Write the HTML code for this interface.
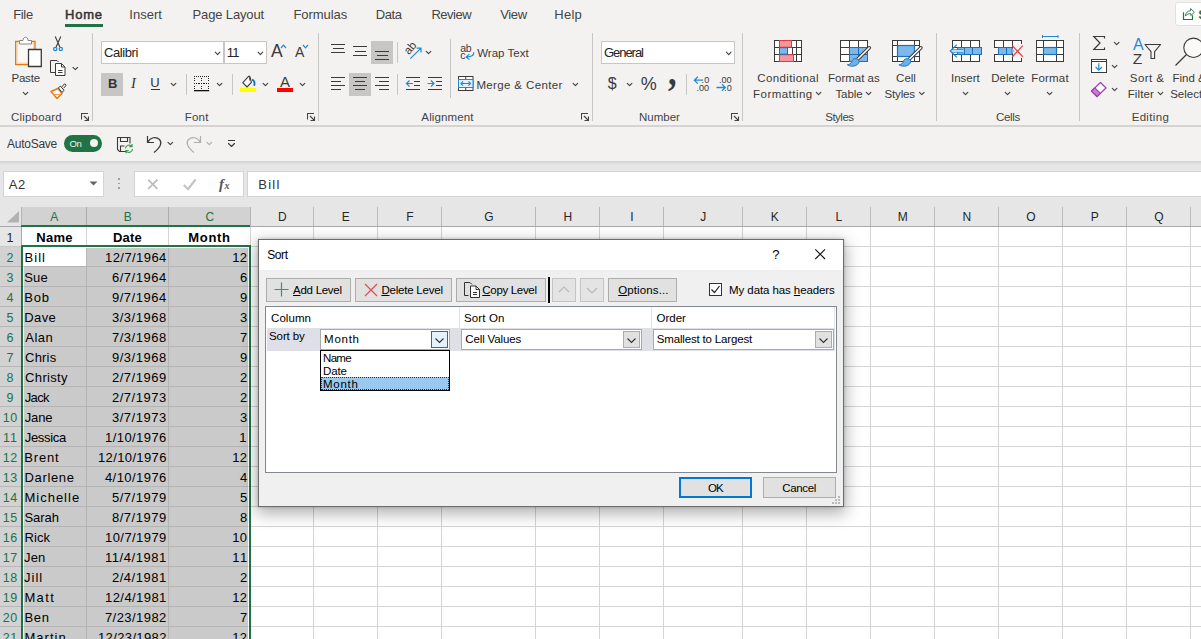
<!DOCTYPE html>
<html><head><meta charset="utf-8"><title>Sort</title><style>
html,body{margin:0;padding:0}
body{width:1201px;height:639px;overflow:hidden;position:relative;background:#fff;font-family:"Liberation Sans",sans-serif}
div,svg,span{position:absolute}
.t{white-space:nowrap;line-height:1}
u{text-decoration:underline;text-underline-offset:1px;text-decoration-thickness:1px}
</style></head><body>
<div style="left:0px;top:0px;width:1201px;height:125px;background:#f3f2f1;"></div>
<div style="left:0px;top:125px;width:1201px;height:2px;background:#d6d4d2;"></div>
<div style="left:0px;top:127px;width:1201px;height:34px;background:#f3f2f1;"></div>
<div style="left:0px;top:161px;width:1201px;height:46px;background:#e6e6e6;"></div>
<div style="left:0px;top:161px;width:1201px;height:4px;background:linear-gradient(#d4d4d4,#e6e6e6)"></div>
<div style="left:0px;top:207px;width:1201px;height:20px;background:#e6e6e6;"></div>
<div style="left:22px;top:207px;width:228px;height:19px;background:#d2d2d2;"></div>
<div style="left:86px;top:207px;width:1px;height:19px;background:#adadad;"></div>
<div style="left:168px;top:207px;width:1px;height:19px;background:#adadad;"></div>
<div style="left:250px;top:207px;width:1px;height:19px;background:#b4b4b4;"></div>
<div style="left:313px;top:207px;width:1px;height:19px;background:#b9b9b9;"></div>
<div style="left:377px;top:207px;width:1px;height:19px;background:#b9b9b9;"></div>
<div style="left:441px;top:207px;width:1px;height:19px;background:#b9b9b9;"></div>
<div style="left:535px;top:207px;width:1px;height:19px;background:#b9b9b9;"></div>
<div style="left:599px;top:207px;width:1px;height:19px;background:#b9b9b9;"></div>
<div style="left:663px;top:207px;width:1px;height:19px;background:#b9b9b9;"></div>
<div style="left:742px;top:207px;width:1px;height:19px;background:#b9b9b9;"></div>
<div style="left:806px;top:207px;width:1px;height:19px;background:#b9b9b9;"></div>
<div style="left:870px;top:207px;width:1px;height:19px;background:#b9b9b9;"></div>
<div style="left:934px;top:207px;width:1px;height:19px;background:#b9b9b9;"></div>
<div style="left:998px;top:207px;width:1px;height:19px;background:#b9b9b9;"></div>
<div style="left:1062px;top:207px;width:1px;height:19px;background:#b9b9b9;"></div>
<div style="left:1126px;top:207px;width:1px;height:19px;background:#b9b9b9;"></div>
<div style="left:1190px;top:207px;width:1px;height:19px;background:#b9b9b9;"></div>
<div style="left:21px;top:207px;width:1px;height:19px;background:#b2b2b2;"></div>
<div style="left:0px;top:226px;width:1201px;height:1px;background:#a9a9a9;"></div>
<div style="left:0px;top:226px;width:22px;height:1px;background:#a8a8a8;"></div>
<div style="left:22px;top:227px;width:1179px;height:412px;background:#fff;"></div>
<div style="left:0px;top:227px;width:22px;height:412px;background:#e6e6e6;"></div>
<div style="left:0px;top:247px;width:22px;height:392px;background:#d2d2d2;"></div>
<div style="left:21px;top:227px;width:1px;height:20px;background:#a8a8a8;"></div>
<div style="left:250px;top:227px;width:1px;height:412px;background:#d5d5d5;"></div>
<div style="left:313px;top:227px;width:1px;height:412px;background:#d5d5d5;"></div>
<div style="left:377px;top:227px;width:1px;height:412px;background:#d5d5d5;"></div>
<div style="left:441px;top:227px;width:1px;height:412px;background:#d5d5d5;"></div>
<div style="left:535px;top:227px;width:1px;height:412px;background:#d5d5d5;"></div>
<div style="left:599px;top:227px;width:1px;height:412px;background:#d5d5d5;"></div>
<div style="left:663px;top:227px;width:1px;height:412px;background:#d5d5d5;"></div>
<div style="left:742px;top:227px;width:1px;height:412px;background:#d5d5d5;"></div>
<div style="left:806px;top:227px;width:1px;height:412px;background:#d5d5d5;"></div>
<div style="left:870px;top:227px;width:1px;height:412px;background:#d5d5d5;"></div>
<div style="left:934px;top:227px;width:1px;height:412px;background:#d5d5d5;"></div>
<div style="left:998px;top:227px;width:1px;height:412px;background:#d5d5d5;"></div>
<div style="left:1062px;top:227px;width:1px;height:412px;background:#d5d5d5;"></div>
<div style="left:1126px;top:227px;width:1px;height:412px;background:#d5d5d5;"></div>
<div style="left:1190px;top:227px;width:1px;height:412px;background:#d5d5d5;"></div>
<div style="left:22px;top:246px;width:1179px;height:1px;background:#d5d5d5;"></div>
<div style="left:0px;top:246px;width:22px;height:1px;background:#c9c9c9;"></div>
<div style="left:22px;top:266px;width:1179px;height:1px;background:#d5d5d5;"></div>
<div style="left:0px;top:266px;width:22px;height:1px;background:#b7b7b7;"></div>
<div style="left:22px;top:286px;width:1179px;height:1px;background:#d5d5d5;"></div>
<div style="left:0px;top:286px;width:22px;height:1px;background:#b7b7b7;"></div>
<div style="left:22px;top:306px;width:1179px;height:1px;background:#d5d5d5;"></div>
<div style="left:0px;top:306px;width:22px;height:1px;background:#b7b7b7;"></div>
<div style="left:22px;top:326px;width:1179px;height:1px;background:#d5d5d5;"></div>
<div style="left:0px;top:326px;width:22px;height:1px;background:#b7b7b7;"></div>
<div style="left:22px;top:346px;width:1179px;height:1px;background:#d5d5d5;"></div>
<div style="left:0px;top:346px;width:22px;height:1px;background:#b7b7b7;"></div>
<div style="left:22px;top:366px;width:1179px;height:1px;background:#d5d5d5;"></div>
<div style="left:0px;top:366px;width:22px;height:1px;background:#b7b7b7;"></div>
<div style="left:22px;top:386px;width:1179px;height:1px;background:#d5d5d5;"></div>
<div style="left:0px;top:386px;width:22px;height:1px;background:#b7b7b7;"></div>
<div style="left:22px;top:406px;width:1179px;height:1px;background:#d5d5d5;"></div>
<div style="left:0px;top:406px;width:22px;height:1px;background:#b7b7b7;"></div>
<div style="left:22px;top:426px;width:1179px;height:1px;background:#d5d5d5;"></div>
<div style="left:0px;top:426px;width:22px;height:1px;background:#b7b7b7;"></div>
<div style="left:22px;top:446px;width:1179px;height:1px;background:#d5d5d5;"></div>
<div style="left:0px;top:446px;width:22px;height:1px;background:#b7b7b7;"></div>
<div style="left:22px;top:466px;width:1179px;height:1px;background:#d5d5d5;"></div>
<div style="left:0px;top:466px;width:22px;height:1px;background:#b7b7b7;"></div>
<div style="left:22px;top:486px;width:1179px;height:1px;background:#d5d5d5;"></div>
<div style="left:0px;top:486px;width:22px;height:1px;background:#b7b7b7;"></div>
<div style="left:22px;top:506px;width:1179px;height:1px;background:#d5d5d5;"></div>
<div style="left:0px;top:506px;width:22px;height:1px;background:#b7b7b7;"></div>
<div style="left:22px;top:526px;width:1179px;height:1px;background:#d5d5d5;"></div>
<div style="left:0px;top:526px;width:22px;height:1px;background:#b7b7b7;"></div>
<div style="left:22px;top:546px;width:1179px;height:1px;background:#d5d5d5;"></div>
<div style="left:0px;top:546px;width:22px;height:1px;background:#b7b7b7;"></div>
<div style="left:22px;top:566px;width:1179px;height:1px;background:#d5d5d5;"></div>
<div style="left:0px;top:566px;width:22px;height:1px;background:#b7b7b7;"></div>
<div style="left:22px;top:586px;width:1179px;height:1px;background:#d5d5d5;"></div>
<div style="left:0px;top:586px;width:22px;height:1px;background:#b7b7b7;"></div>
<div style="left:22px;top:606px;width:1179px;height:1px;background:#d5d5d5;"></div>
<div style="left:0px;top:606px;width:22px;height:1px;background:#b7b7b7;"></div>
<div style="left:22px;top:626px;width:1179px;height:1px;background:#d5d5d5;"></div>
<div style="left:0px;top:626px;width:22px;height:1px;background:#b7b7b7;"></div>
<div style="left:22px;top:646px;width:1179px;height:1px;background:#d5d5d5;"></div>
<div style="left:0px;top:646px;width:22px;height:1px;background:#b7b7b7;"></div>
<div style="left:86px;top:227px;width:1px;height:20px;background:#d5d5d5;"></div>
<div style="left:168px;top:227px;width:1px;height:20px;background:#d5d5d5;"></div>
<div style="left:24px;top:248px;width:224px;height:391px;background:#cacaca;"></div>
<div style="left:86px;top:248px;width:1px;height:391px;background:#b4b4b4;"></div>
<div style="left:168px;top:248px;width:1px;height:391px;background:#b4b4b4;"></div>
<div style="left:24px;top:266px;width:224px;height:1px;background:#b4b4b4;"></div>
<div style="left:24px;top:286px;width:224px;height:1px;background:#b4b4b4;"></div>
<div style="left:24px;top:306px;width:224px;height:1px;background:#b4b4b4;"></div>
<div style="left:24px;top:326px;width:224px;height:1px;background:#b4b4b4;"></div>
<div style="left:24px;top:346px;width:224px;height:1px;background:#b4b4b4;"></div>
<div style="left:24px;top:366px;width:224px;height:1px;background:#b4b4b4;"></div>
<div style="left:24px;top:386px;width:224px;height:1px;background:#b4b4b4;"></div>
<div style="left:24px;top:406px;width:224px;height:1px;background:#b4b4b4;"></div>
<div style="left:24px;top:426px;width:224px;height:1px;background:#b4b4b4;"></div>
<div style="left:24px;top:446px;width:224px;height:1px;background:#b4b4b4;"></div>
<div style="left:24px;top:466px;width:224px;height:1px;background:#b4b4b4;"></div>
<div style="left:24px;top:486px;width:224px;height:1px;background:#b4b4b4;"></div>
<div style="left:24px;top:506px;width:224px;height:1px;background:#b4b4b4;"></div>
<div style="left:24px;top:526px;width:224px;height:1px;background:#b4b4b4;"></div>
<div style="left:24px;top:546px;width:224px;height:1px;background:#b4b4b4;"></div>
<div style="left:24px;top:566px;width:224px;height:1px;background:#b4b4b4;"></div>
<div style="left:24px;top:586px;width:224px;height:1px;background:#b4b4b4;"></div>
<div style="left:24px;top:606px;width:224px;height:1px;background:#b4b4b4;"></div>
<div style="left:24px;top:626px;width:224px;height:1px;background:#b4b4b4;"></div>
<div style="left:24px;top:646px;width:224px;height:1px;background:#b4b4b4;"></div>
<div style="left:24px;top:248px;width:62px;height:18px;background:#fff;"></div>
<div style="left:21px;top:225px;width:229px;height:2px;background:#217346;"></div>
<div style="left:21px;top:245px;width:230px;height:2px;background:#217346;"></div>
<div style="left:21px;top:245px;width:2px;height:394px;background:#217346;"></div>
<div style="left:249px;top:245px;width:2px;height:394px;background:#217346;"></div>
<span class="t" style="left:50.29px;top:211.00px;font-size:12px;letter-spacing:0.469px;color:#217346;">A</span>
<span class="t" style="left:123.79px;top:211.00px;font-size:12px;letter-spacing:-0.031px;color:#217346;">B</span>
<span class="t" style="left:205.46px;top:211.00px;font-size:12px;letter-spacing:-0.844px;color:#217346;">C</span>
<span class="t" style="left:277.96px;top:211.00px;font-size:12px;letter-spacing:0.359px;color:#262626;">D</span>
<span class="t" style="left:341.79px;top:211.00px;font-size:12px;letter-spacing:-0.844px;color:#262626;">E</span>
<span class="t" style="left:406.13px;top:211.00px;font-size:12px;letter-spacing:-0.609px;color:#262626;">F</span>
<span class="t" style="left:484.13px;top:211.00px;font-size:12px;letter-spacing:-0.094px;color:#262626;">G</span>
<span class="t" style="left:563.46px;top:211.00px;font-size:12px;letter-spacing:0.469px;color:#262626;">H</span>
<span class="t" style="left:630.13px;top:211.00px;font-size:12px;letter-spacing:0.359px;color:#262626;">I</span>
<span class="t" style="left:700.30px;top:211.00px;font-size:12px;letter-spacing:-1.312px;color:#262626;">J</span>
<span class="t" style="left:770.79px;top:211.00px;font-size:12px;letter-spacing:-0.391px;color:#262626;">K</span>
<span class="t" style="left:835.46px;top:211.00px;font-size:12px;letter-spacing:-0.516px;color:#262626;">L</span>
<span class="t" style="left:897.80px;top:211.00px;font-size:12px;letter-spacing:2.531px;color:#262626;">M</span>
<span class="t" style="left:962.46px;top:211.00px;font-size:12px;letter-spacing:0.797px;color:#262626;">N</span>
<span class="t" style="left:1026.13px;top:211.00px;font-size:12px;letter-spacing:0.375px;color:#262626;">O</span>
<span class="t" style="left:1090.79px;top:211.00px;font-size:12px;letter-spacing:-0.438px;color:#262626;">P</span>
<span class="t" style="left:1154.13px;top:211.00px;font-size:12px;letter-spacing:0.531px;color:#262626;">Q</span>
<svg style="left:6px;top:211px;" width="14" height="12" viewBox="0 0 14 12"><path d="M13 0 L13 11.5 L1 11.5 Z" fill="#b2b2b2"/></svg>
<span class="t" style="left:6.42px;top:232.00px;font-size:12.5px;letter-spacing:0.484px;color:#262626;">1</span>
<span class="t" style="left:6.42px;top:252.00px;font-size:12.5px;letter-spacing:0.484px;color:#217346;">2</span>
<span class="t" style="left:6.42px;top:272.00px;font-size:12.5px;letter-spacing:0.484px;color:#217346;">3</span>
<span class="t" style="left:6.42px;top:292.00px;font-size:12.5px;letter-spacing:0.484px;color:#217346;">4</span>
<span class="t" style="left:6.42px;top:312.00px;font-size:12.5px;letter-spacing:0.484px;color:#217346;">5</span>
<span class="t" style="left:6.42px;top:332.00px;font-size:12.5px;letter-spacing:0.484px;color:#217346;">6</span>
<span class="t" style="left:6.42px;top:352.00px;font-size:12.5px;letter-spacing:0.484px;color:#217346;">7</span>
<span class="t" style="left:6.42px;top:372.00px;font-size:12.5px;letter-spacing:0.484px;color:#217346;">8</span>
<span class="t" style="left:6.42px;top:392.00px;font-size:12.5px;letter-spacing:0.484px;color:#217346;">9</span>
<span class="t" style="left:2.71px;top:412.00px;font-size:12.5px;letter-spacing:0.477px;color:#217346;">10</span>
<span class="t" style="left:2.94px;top:432.00px;font-size:12.5px;letter-spacing:0.938px;color:#217346;">11</span>
<span class="t" style="left:2.71px;top:452.00px;font-size:12.5px;letter-spacing:0.477px;color:#217346;">12</span>
<span class="t" style="left:2.71px;top:472.00px;font-size:12.5px;letter-spacing:0.477px;color:#217346;">13</span>
<span class="t" style="left:2.71px;top:492.00px;font-size:12.5px;letter-spacing:0.477px;color:#217346;">14</span>
<span class="t" style="left:2.71px;top:512.00px;font-size:12.5px;letter-spacing:0.477px;color:#217346;">15</span>
<span class="t" style="left:2.71px;top:532.00px;font-size:12.5px;letter-spacing:0.477px;color:#217346;">16</span>
<span class="t" style="left:2.71px;top:552.00px;font-size:12.5px;letter-spacing:0.477px;color:#217346;">17</span>
<span class="t" style="left:2.71px;top:572.00px;font-size:12.5px;letter-spacing:0.477px;color:#217346;">18</span>
<span class="t" style="left:2.71px;top:592.00px;font-size:12.5px;letter-spacing:0.477px;color:#217346;">19</span>
<span class="t" style="left:2.71px;top:612.00px;font-size:12.5px;letter-spacing:0.477px;color:#217346;">20</span>
<span class="t" style="left:2.71px;top:632.00px;font-size:12.5px;letter-spacing:0.477px;color:#217346;">21</span>
<span class="t" style="left:36.34px;top:231.00px;font-size:13px;font-weight:700;letter-spacing:0.250px;color:#000;">Name</span>
<span class="t" style="left:113.00px;top:231.00px;font-size:13px;font-weight:700;letter-spacing:0.205px;color:#000;">Date</span>
<span class="t" style="left:188.34px;top:231.00px;font-size:13px;font-weight:700;letter-spacing:0.673px;color:#000;">Month</span>
<span class="t" style="left:24.54px;top:251.00px;font-size:13px;letter-spacing:1.029px;color:#000;">Bill</span>
<span class="t" style="left:105.00px;top:251.00px;font-size:13px;letter-spacing:0.437px;color:#000;">12/7/1964</span>
<span class="t" style="left:232.32px;top:251.00px;font-size:13px;letter-spacing:0.126px;color:#000;">12</span>
<span class="t" style="left:24.22px;top:271.00px;font-size:13px;letter-spacing:0.205px;color:#000;">Sue</span>
<span class="t" style="left:111.90px;top:271.00px;font-size:13px;letter-spacing:0.534px;color:#000;">6/7/1964</span>
<span class="t" style="left:240.12px;top:271.00px;font-size:13px;letter-spacing:0.626px;color:#000;">6</span>
<span class="t" style="left:24.32px;top:291.00px;font-size:13px;letter-spacing:0.750px;color:#000;">Bob</span>
<span class="t" style="left:111.90px;top:291.00px;font-size:13px;letter-spacing:0.534px;color:#000;">9/7/1964</span>
<span class="t" style="left:240.12px;top:291.00px;font-size:13px;letter-spacing:0.626px;color:#000;">9</span>
<span class="t" style="left:24.32px;top:311.00px;font-size:13px;letter-spacing:0.395px;color:#000;">Dave</span>
<span class="t" style="left:111.90px;top:311.00px;font-size:13px;letter-spacing:0.534px;color:#000;">3/3/1968</span>
<span class="t" style="left:240.12px;top:311.00px;font-size:13px;letter-spacing:0.626px;color:#000;">3</span>
<span class="t" style="left:25.24px;top:331.00px;font-size:13px;letter-spacing:0.494px;color:#000;">Alan</span>
<span class="t" style="left:111.90px;top:331.00px;font-size:13px;letter-spacing:0.534px;color:#000;">7/3/1968</span>
<span class="t" style="left:240.12px;top:331.00px;font-size:13px;letter-spacing:0.626px;color:#000;">7</span>
<span class="t" style="left:25.12px;top:351.00px;font-size:13px;letter-spacing:0.183px;color:#000;">Chris</span>
<span class="t" style="left:111.90px;top:351.00px;font-size:13px;letter-spacing:0.534px;color:#000;">9/3/1968</span>
<span class="t" style="left:240.12px;top:351.00px;font-size:13px;letter-spacing:0.626px;color:#000;">9</span>
<span class="t" style="left:25.12px;top:371.00px;font-size:13px;letter-spacing:0.327px;color:#000;">Christy</span>
<span class="t" style="left:111.90px;top:371.00px;font-size:13px;letter-spacing:0.534px;color:#000;">2/7/1969</span>
<span class="t" style="left:240.12px;top:371.00px;font-size:13px;letter-spacing:0.626px;color:#000;">2</span>
<span class="t" style="left:24.68px;top:391.00px;font-size:13px;letter-spacing:-0.605px;color:#000;">Jack</span>
<span class="t" style="left:111.90px;top:391.00px;font-size:13px;letter-spacing:0.534px;color:#000;">2/7/1973</span>
<span class="t" style="left:240.12px;top:391.00px;font-size:13px;letter-spacing:0.626px;color:#000;">2</span>
<span class="t" style="left:24.68px;top:411.00px;font-size:13px;letter-spacing:-0.136px;color:#000;">Jane</span>
<span class="t" style="left:111.90px;top:411.00px;font-size:13px;letter-spacing:0.534px;color:#000;">3/7/1973</span>
<span class="t" style="left:240.12px;top:411.00px;font-size:13px;letter-spacing:0.626px;color:#000;">3</span>
<span class="t" style="left:24.68px;top:431.00px;font-size:13px;letter-spacing:-0.285px;color:#000;">Jessica</span>
<span class="t" style="left:105.00px;top:431.00px;font-size:13px;letter-spacing:0.437px;color:#000;">1/10/1976</span>
<span class="t" style="left:239.32px;top:431.00px;font-size:13px;letter-spacing:0.626px;color:#000;">1</span>
<span class="t" style="left:24.32px;top:451.00px;font-size:13px;letter-spacing:0.811px;color:#000;">Brent</span>
<span class="t" style="left:98.00px;top:451.00px;font-size:13px;letter-spacing:0.370px;color:#000;">12/10/1976</span>
<span class="t" style="left:232.32px;top:451.00px;font-size:13px;letter-spacing:0.126px;color:#000;">12</span>
<span class="t" style="left:24.44px;top:471.00px;font-size:13px;letter-spacing:0.674px;color:#000;">Darlene</span>
<span class="t" style="left:104.90px;top:471.00px;font-size:13px;letter-spacing:0.449px;color:#000;">4/10/1976</span>
<span class="t" style="left:240.12px;top:471.00px;font-size:13px;letter-spacing:0.626px;color:#000;">4</span>
<span class="t" style="left:24.44px;top:491.00px;font-size:13px;letter-spacing:1.002px;color:#000;">Michelle</span>
<span class="t" style="left:111.90px;top:491.00px;font-size:13px;letter-spacing:0.534px;color:#000;">5/7/1979</span>
<span class="t" style="left:240.12px;top:491.00px;font-size:13px;letter-spacing:0.626px;color:#000;">5</span>
<span class="t" style="left:24.44px;top:511.00px;font-size:13px;letter-spacing:-0.059px;color:#000;">Sarah</span>
<span class="t" style="left:111.90px;top:511.00px;font-size:13px;letter-spacing:0.534px;color:#000;">8/7/1979</span>
<span class="t" style="left:240.12px;top:511.00px;font-size:13px;letter-spacing:0.626px;color:#000;">8</span>
<span class="t" style="left:24.44px;top:531.00px;font-size:13px;letter-spacing:0.121px;color:#000;">Rick</span>
<span class="t" style="left:105.00px;top:531.00px;font-size:13px;letter-spacing:0.437px;color:#000;">10/7/1979</span>
<span class="t" style="left:232.32px;top:531.00px;font-size:13px;letter-spacing:0.126px;color:#000;">10</span>
<span class="t" style="left:24.12px;top:551.00px;font-size:13px;letter-spacing:0.050px;color:#000;">Jen</span>
<span class="t" style="left:105.00px;top:551.00px;font-size:13px;letter-spacing:0.545px;color:#000;">11/4/1981</span>
<span class="t" style="left:232.32px;top:551.00px;font-size:13px;letter-spacing:1.310px;color:#000;">11</span>
<span class="t" style="left:24.12px;top:571.00px;font-size:13px;letter-spacing:0.985px;color:#000;">Jill</span>
<span class="t" style="left:111.90px;top:571.00px;font-size:13px;letter-spacing:0.534px;color:#000;">2/4/1981</span>
<span class="t" style="left:240.12px;top:571.00px;font-size:13px;letter-spacing:0.626px;color:#000;">2</span>
<span class="t" style="left:24.44px;top:591.00px;font-size:13px;letter-spacing:1.351px;color:#000;">Matt</span>
<span class="t" style="left:105.00px;top:591.00px;font-size:13px;letter-spacing:0.437px;color:#000;">12/4/1981</span>
<span class="t" style="left:232.32px;top:591.00px;font-size:13px;letter-spacing:0.126px;color:#000;">12</span>
<span class="t" style="left:24.44px;top:611.00px;font-size:13px;letter-spacing:0.750px;color:#000;">Ben</span>
<span class="t" style="left:104.90px;top:611.00px;font-size:13px;letter-spacing:0.449px;color:#000;">7/23/1982</span>
<span class="t" style="left:240.12px;top:611.00px;font-size:13px;letter-spacing:0.626px;color:#000;">7</span>
<span class="t" style="left:24.44px;top:631.00px;font-size:13px;letter-spacing:1.046px;color:#000;">Martin</span>
<span class="t" style="left:98.00px;top:631.00px;font-size:13px;letter-spacing:0.370px;color:#000;">12/23/1982</span>
<span class="t" style="left:232.32px;top:631.00px;font-size:13px;letter-spacing:0.126px;color:#000;">12</span>
<span class="t" style="left:13.22px;top:8.00px;font-size:13px;letter-spacing:-0.340px;color:#444;">File</span>
<span class="t" style="left:129.32px;top:8.00px;font-size:13px;letter-spacing:0.021px;color:#444;">Insert</span>
<span class="t" style="left:192.54px;top:8.00px;font-size:13px;letter-spacing:-0.142px;color:#444;">Page Layout</span>
<span class="t" style="left:293.44px;top:8.00px;font-size:13px;letter-spacing:-0.066px;color:#444;">Formulas</span>
<span class="t" style="left:375.78px;top:8.00px;font-size:13px;letter-spacing:-0.401px;color:#444;">Data</span>
<span class="t" style="left:431.44px;top:8.00px;font-size:13px;letter-spacing:-0.494px;color:#444;">Review</span>
<span class="t" style="left:500.24px;top:8.00px;font-size:13px;letter-spacing:-0.367px;color:#444;">View</span>
<span class="t" style="left:554.32px;top:8.00px;font-size:13px;letter-spacing:0.246px;color:#444;">Help</span>
<span class="t" style="left:65.12px;top:8.00px;font-size:13px;letter-spacing:0.726px;-webkit-text-stroke:0.5px #333;color:#333;">Home</span>
<div style="left:65px;top:24px;width:38px;height:3px;background:#217346;"></div>
<div style="left:1175px;top:2px;width:40px;height:24px;background:#fff;border:1px solid #e3e1df;box-sizing:border-box;border-radius:3px;"></div>
<svg style="left:1182px;top:7px;" width="14" height="14" viewBox="0 0 14 14"><path d="M1.500 5.200v7.300h9v-4.300" fill="none" stroke="#217346" stroke-width="1.200"/><path d="M8.600 1.500L12.300 5.200L8.800 8.600V6.700C6.500 6.600 4.800 7.300 3.400 9.100C3.600 5.900 5.500 3.900 8.600 3.700Z" fill="none" stroke="#217346" stroke-width="0.900" stroke-linejoin="round"/></svg>
<span class="t" style="left:1198.22px;top:8.00px;font-size:13px;font-weight:700;color:#217346;">S</span>
<div style="left:92px;top:33px;width:1px;height:88px;background:#c8c6c4;"></div>
<div style="left:318px;top:33px;width:1px;height:88px;background:#c8c6c4;"></div>
<div style="left:592px;top:33px;width:1px;height:88px;background:#c8c6c4;"></div>
<div style="left:742px;top:33px;width:1px;height:88px;background:#c8c6c4;"></div>
<div style="left:936px;top:33px;width:1px;height:88px;background:#c8c6c4;"></div>
<div style="left:1079px;top:33px;width:1px;height:88px;background:#c8c6c4;"></div>
<div style="left:186px;top:74px;width:1px;height:21px;background:#c8c6c4;"></div>
<div style="left:232px;top:74px;width:1px;height:21px;background:#c8c6c4;"></div>
<div style="left:397px;top:42px;width:1px;height:21px;background:#c8c6c4;"></div>
<div style="left:397px;top:74px;width:1px;height:21px;background:#c8c6c4;"></div>
<div style="left:450px;top:39px;width:1px;height:59px;background:#c8c6c4;"></div>
<div style="left:686px;top:74px;width:1px;height:21px;background:#c8c6c4;"></div>
<span class="t" style="left:11.09px;top:112.00px;font-size:11.5px;letter-spacing:0.176px;color:#444;">Clipboard</span>
<span class="t" style="left:184.63px;top:112.00px;font-size:11.5px;letter-spacing:0.246px;color:#444;">Font</span>
<span class="t" style="left:421.33px;top:112.00px;font-size:11.5px;letter-spacing:0.136px;color:#444;">Alignment</span>
<span class="t" style="left:639.09px;top:112.00px;font-size:11.5px;letter-spacing:-0.025px;color:#444;">Number</span>
<span class="t" style="left:825.21px;top:112.00px;font-size:11.5px;letter-spacing:-0.487px;color:#444;">Styles</span>
<span class="t" style="left:996.09px;top:112.00px;font-size:11.5px;letter-spacing:-0.369px;color:#444;">Cells</span>
<span class="t" style="left:1131.63px;top:112.00px;font-size:11.5px;letter-spacing:0.334px;color:#444;">Editing</span>
<svg style="left:81px;top:113px;" width="9" height="9" viewBox="0 0 9 9"><path d="M0.5 6.5V0.5H7M3 3L7.500 7.500M7.500 3.500V7.500H3.500" fill="none" stroke="#444" stroke-width="1.100"/></svg>
<svg style="left:307px;top:113px;" width="9" height="9" viewBox="0 0 9 9"><path d="M0.5 6.5V0.5H7M3 3L7.500 7.500M7.500 3.500V7.500H3.500" fill="none" stroke="#444" stroke-width="1.100"/></svg>
<svg style="left:581px;top:113px;" width="9" height="9" viewBox="0 0 9 9"><path d="M0.5 6.5V0.5H7M3 3L7.500 7.500M7.500 3.500V7.500H3.500" fill="none" stroke="#444" stroke-width="1.100"/></svg>
<svg style="left:731px;top:113px;" width="9" height="9" viewBox="0 0 9 9"><path d="M0.5 6.5V0.5H7M3 3L7.500 7.500M7.500 3.500V7.500H3.500" fill="none" stroke="#444" stroke-width="1.100"/></svg>
<svg style="left:13px;top:36px;" width="31" height="33" viewBox="0 0 31 33"><path d="M2.700 5.500h19.300v23h-19.300z" fill="#faf9f8" stroke="#e07d10" stroke-width="1.400"/>
<path d="M4.200 7h16.300v20h-16.300z" fill="none" stroke="#fbd9a0" stroke-width="1.200"/>
<path d="M6.500 8V4.500h3.500c0-4.400 5-4.400 5 0h3.500V8z" fill="#fff" stroke="#8a8886" stroke-width="1"/>
<path d="M15.500 13.500h12.800v17h-12.800z" fill="#fff" stroke="#3b3a39" stroke-width="1.300"/></svg>
<span class="t" style="left:11.41px;top:73.00px;font-size:11.5px;letter-spacing:-0.196px;color:#3b3a39;">Paste</span>
<svg style="left:0;top:0" width="1201" height="639"><path d="M23.20 92.30 L25.50 94.70 L27.80 92.30" fill="none" stroke="#444" stroke-width="1.15" stroke-linecap="round" stroke-linejoin="round"/></svg>
<svg style="left:51px;top:35px;" width="14" height="18" viewBox="0 0 14 18"><path d="M4.200 1.500L8.900 12M9.800 1.500L5.100 12" stroke="#3b3a39" stroke-width="1.100" fill="none"/>
<circle cx="4.200" cy="14" r="1.600" fill="none" stroke="#1e8ad6" stroke-width="1.300"/><circle cx="9.800" cy="14" r="1.600" fill="none" stroke="#1e8ad6" stroke-width="1.300"/></svg>
<svg style="left:49px;top:59px;" width="18" height="18" viewBox="0 0 18 18"><path d="M7.5 13.5h-6v-12h6.5l1.5 1.5" fill="none" stroke="#3b3a39" stroke-width="1"/>
<path d="M6.5 4.5h6l3.5 3.5v8.5h-9.500z" fill="#fff" stroke="#3b3a39" stroke-width="1"/><path d="M12.5 4.5v3.500h3.500" fill="none" stroke="#3b3a39" stroke-width="1"/>
<path d="M9 11.500h4.500M9 13.500h4.500" stroke="#3b3a39" stroke-width="1"/></svg>
<svg style="left:0;top:0" width="1201" height="639"><path d="M73.00 67.30 L75.30 69.70 L77.60 67.30" fill="none" stroke="#444" stroke-width="1.15" stroke-linecap="round" stroke-linejoin="round"/></svg>
<svg style="left:50px;top:83px;" width="17" height="16" viewBox="0 0 17 16"><path d="M1 8.500L8 5.500l4 5L7 15.500z" fill="#fff" stroke="#e8780c" stroke-width="1.400" stroke-linejoin="round"/>
<path d="M3.500 11.500h7" stroke="#f3a04a" stroke-width="1.200"/>
<path d="M8.300 4.800l2.200-1.700 3.600 4.300-2.200 2z" fill="#f3f2f1" stroke="#3b3a39" stroke-width="1"/>
<path d="M12 3.800l2.500-3 1.700 1.300-2.500 3.100" fill="#f3f2f1" stroke="#3b3a39" stroke-width="1"/></svg>
<div style="left:101px;top:41px;width:123px;height:23px;background:#fff;border:1px solid #c8c6c4;box-sizing:border-box;"></div>
<div style="left:224px;top:41px;width:43px;height:23px;background:#fff;border:1px solid #c8c6c4;box-sizing:border-box;"></div>
<span class="t" style="left:104.00px;top:46.00px;font-size:13px;letter-spacing:-0.412px;color:#222;">Calibri</span>
<svg style="left:0;top:0" width="1201" height="639"><path d="M215.30 52.20 L217.60 54.60 L219.90 52.20" fill="none" stroke="#444" stroke-width="1.15" stroke-linecap="round" stroke-linejoin="round"/></svg>
<span class="t" style="left:226.66px;top:46.00px;font-size:13px;letter-spacing:-0.7px;color:#222;">11</span>
<svg style="left:0;top:0" width="1201" height="639"><path d="M258.10 52.20 L260.40 54.60 L262.70 52.20" fill="none" stroke="#444" stroke-width="1.15" stroke-linecap="round" stroke-linejoin="round"/></svg>
<span class="t" style="left:270.97px;top:43.00px;font-size:17.5px;letter-spacing:0.812px;color:#3b3a39;">A</span>
<svg style="left:280px;top:44px;" width="7" height="5" viewBox="0 0 7 5"><path d="M1 4L3.500 1.200L6 4" fill="none" stroke="#1e8ad6" stroke-width="1.2"/></svg>
<span class="t" style="left:294.96px;top:45.00px;font-size:14px;letter-spacing:0.336px;color:#3b3a39;">A</span>
<svg style="left:302px;top:44px;" width="7" height="5" viewBox="0 0 7 5"><path d="M1 1L3.500 3.800L6 1" fill="none" stroke="#1e8ad6" stroke-width="1.2"/></svg>
<div style="left:101px;top:73px;width:22px;height:23px;background:#c8c6c4;"></div>
<span class="t" style="left:108.00px;top:77.00px;font-size:13px;font-weight:700;letter-spacing:-0.731px;color:#333;">B</span>
<span class="t" style="left:131.03px;top:76.00px;font-size:14.5px;letter-spacing:3.709px;font-style:italic;font-family:'Liberation Serif',serif;color:#333;">I</span>
<span class="t" style="left:150.22px;top:76.00px;font-size:13px;letter-spacing:1.169px;color:#333;">U</span>
<div style="left:151px;top:89px;width:9px;height:1px;background:#333;"></div>
<svg style="left:0;top:0" width="1201" height="639"><path d="M171.20 83.30 L173.50 85.70 L175.80 83.30" fill="none" stroke="#444" stroke-width="1.15" stroke-linecap="round" stroke-linejoin="round"/></svg>
<svg style="left:194px;top:76px;" width="16" height="16" viewBox="0 0 16 16"><rect x="0" y="0" width="1" height="1" fill="#222"/><rect x="0" y="2" width="1" height="1" fill="#222"/><rect x="0" y="4" width="1" height="1" fill="#222"/><rect x="0" y="7" width="1" height="1" fill="#222"/><rect x="0" y="10" width="1" height="1" fill="#222"/><rect x="0" y="12" width="1" height="1" fill="#222"/><rect x="2" y="0" width="1" height="1" fill="#222"/><rect x="2" y="7" width="1" height="1" fill="#222"/><rect x="4" y="0" width="1" height="1" fill="#222"/><rect x="4" y="7" width="1" height="1" fill="#222"/><rect x="5" y="7" width="1" height="1" fill="#222"/><rect x="6" y="0" width="1" height="1" fill="#222"/><rect x="7" y="2" width="1" height="1" fill="#222"/><rect x="7" y="4" width="1" height="1" fill="#222"/><rect x="7" y="7" width="1" height="1" fill="#222"/><rect x="7" y="10" width="1" height="1" fill="#222"/><rect x="7" y="12" width="1" height="1" fill="#222"/><rect x="8" y="0" width="1" height="1" fill="#222"/><rect x="9" y="7" width="1" height="1" fill="#222"/><rect x="10" y="0" width="1" height="1" fill="#222"/><rect x="10" y="7" width="1" height="1" fill="#222"/><rect x="12" y="0" width="1" height="1" fill="#222"/><rect x="12" y="7" width="1" height="1" fill="#222"/><rect x="14" y="0" width="1" height="1" fill="#222"/><rect x="14" y="2" width="1" height="1" fill="#222"/><rect x="14" y="4" width="1" height="1" fill="#222"/><rect x="14" y="7" width="1" height="1" fill="#222"/><rect x="14" y="10" width="1" height="1" fill="#222"/><rect x="14" y="12" width="1" height="1" fill="#222"/><rect x="0" y="14" width="15.2" height="1.300" fill="#111"/></svg>
<svg style="left:0;top:0" width="1201" height="639"><path d="M217.30 83.30 L219.60 85.70 L221.90 83.30" fill="none" stroke="#444" stroke-width="1.15" stroke-linecap="round" stroke-linejoin="round"/></svg>
<svg style="left:240px;top:75px;" width="17" height="18" viewBox="0 0 17 18"><path d="M2.800 7.700L8.300 1.600c0.800 -0.800 1.600 -0.400 1.700 0.500L11.400 7.300L7 12z" fill="#faf9f8" stroke="#3b3a39" stroke-width="1.100" stroke-linejoin="round"/>
<path d="M9.800 2v3.500" stroke="#3b3a39" stroke-width="1" fill="none"/>
<path d="M12 4.600c2.200 0.700 3 3.200 2.200 6.300" fill="none" stroke="#1e6fb8" stroke-width="1.800"/>
<rect x="-0.200" y="12.900" width="16.400" height="4.100" fill="#ffff00"/></svg>
<svg style="left:0;top:0" width="1201" height="639"><path d="M263.10 83.30 L265.40 85.70 L267.70 83.30" fill="none" stroke="#444" stroke-width="1.15" stroke-linecap="round" stroke-linejoin="round"/></svg>
<span class="t" style="left:280.12px;top:74.00px;font-size:15px;letter-spacing:1.684px;color:#3b3a39;">A</span>
<div style="left:277px;top:88px;width:16px;height:4px;background:#f00;"></div>
<svg style="left:0;top:0" width="1201" height="639"><path d="M300.20 83.30 L302.50 85.70 L304.80 83.30" fill="none" stroke="#444" stroke-width="1.15" stroke-linecap="round" stroke-linejoin="round"/></svg>
<div style="left:331.0px;top:44px;width:14px;height:1px;background:#3b3a39;"></div>
<div style="left:332.5px;top:48px;width:11px;height:1px;background:#3b3a39;"></div>
<div style="left:331.0px;top:52px;width:14px;height:1px;background:#3b3a39;"></div>
<div style="left:353.0px;top:46px;width:14px;height:1px;background:#3b3a39;"></div>
<div style="left:354.5px;top:51px;width:11px;height:1px;background:#3b3a39;"></div>
<div style="left:353.0px;top:55px;width:14px;height:1px;background:#3b3a39;"></div>
<div style="left:371px;top:41px;width:22px;height:23px;background:#c8c6c4;"></div>
<div style="left:375.0px;top:51px;width:14px;height:1px;background:#3b3a39;"></div>
<div style="left:376.5px;top:55px;width:11px;height:1px;background:#3b3a39;"></div>
<div style="left:375.0px;top:59px;width:14px;height:1px;background:#3b3a39;"></div>
<div style="left:331px;top:77px;width:14px;height:1px;background:#3b3a39;"></div>
<div style="left:331px;top:81px;width:10px;height:1px;background:#3b3a39;"></div>
<div style="left:331px;top:85px;width:14px;height:1px;background:#3b3a39;"></div>
<div style="left:331px;top:89px;width:10px;height:1px;background:#3b3a39;"></div>
<div style="left:349px;top:73px;width:22px;height:23px;background:#c8c6c4;"></div>
<div style="left:353.0px;top:77px;width:14px;height:1px;background:#3b3a39;"></div>
<div style="left:355.0px;top:81px;width:10px;height:1px;background:#3b3a39;"></div>
<div style="left:353.0px;top:85px;width:14px;height:1px;background:#3b3a39;"></div>
<div style="left:355.0px;top:89px;width:10px;height:1px;background:#3b3a39;"></div>
<div style="left:375px;top:77px;width:14px;height:1px;background:#3b3a39;"></div>
<div style="left:379px;top:81px;width:10px;height:1px;background:#3b3a39;"></div>
<div style="left:375px;top:85px;width:14px;height:1px;background:#3b3a39;"></div>
<div style="left:379px;top:89px;width:10px;height:1px;background:#3b3a39;"></div>
<svg style="left:403px;top:42px;" width="20" height="19" viewBox="0 0 20 19"><text x="0" y="0" font-size="11.500" fill="#3b3a39" font-family="Liberation Sans, sans-serif" transform="translate(6 13.300) rotate(-50)">ab</text>
<path d="M7.300 16.600L17.800 6.400M13.600 6.200h4.400v4.400" fill="none" stroke="#1e8ad6" stroke-width="1.200"/></svg>
<svg style="left:0;top:0" width="1201" height="639"><path d="M426.20 51.30 L428.50 53.70 L430.80 51.30" fill="none" stroke="#444" stroke-width="1.15" stroke-linecap="round" stroke-linejoin="round"/></svg>
<div style="left:406px;top:77px;width:14px;height:1px;background:#3b3a39;"></div>
<div style="left:406px;top:89px;width:14px;height:1px;background:#3b3a39;"></div>
<div style="left:414px;top:81px;width:6px;height:1px;background:#3b3a39;"></div>
<div style="left:414px;top:85px;width:6px;height:1px;background:#3b3a39;"></div>
<svg style="left:405px;top:79px;" width="9" height="9" viewBox="0 0 9 9"><path d="M8 4.500H1.500M4.500 1.500L1.500 4.500L4.500 7.500" fill="none" stroke="#1e8ad6" stroke-width="1.200"/></svg>
<div style="left:428px;top:77px;width:14px;height:1px;background:#3b3a39;"></div>
<div style="left:428px;top:89px;width:14px;height:1px;background:#3b3a39;"></div>
<div style="left:436px;top:81px;width:6px;height:1px;background:#3b3a39;"></div>
<div style="left:436px;top:85px;width:6px;height:1px;background:#3b3a39;"></div>
<svg style="left:427px;top:79px;" width="9" height="9" viewBox="0 0 9 9"><path d="M0.500 4.500H7M4 1.500L7 4.500L4 7.500" fill="none" stroke="#1e8ad6" stroke-width="1.200"/></svg>
<svg style="left:460px;top:44px;" width="16" height="18" viewBox="0 0 16 18"><text x="0.300" y="8.400" font-size="10.500" fill="#3b3a39" font-family="Liberation Sans, sans-serif" letter-spacing="-0.3">ab</text>
<text x="0.300" y="15.300" font-size="10.500" fill="#3b3a39" font-family="Liberation Sans, sans-serif">c</text>
<path d="M13.700 8.200c0.400 3.300 -2.400 4.900 -7 4.700M9.400 10.100l-3.200 2.800 3.200 2.700" fill="none" stroke="#1e8ad6" stroke-width="1.200"/></svg>
<span class="t" style="left:477.21px;top:48.00px;font-size:11.5px;letter-spacing:0.013px;color:#3b3a39;">Wrap Text</span>
<svg style="left:458px;top:76px;" width="16" height="16" viewBox="0 0 16 16"><rect x="0.500" y="0.500" width="14.500" height="14" fill="#fff" stroke="#3b3a39" stroke-width="1"/>
<path d="M7.750 0.500v3M7.750 11.500v3" stroke="#3b3a39" stroke-width="1"/>
<rect x="0.500" y="3.500" width="14.500" height="8" fill="#e3f1fb" stroke="#1e8ad6" stroke-width="1"/>
<path d="M3 7.500h9.500M5 5.500L3 7.500l2 2M10.500 5.500l2 2-2 2" fill="none" stroke="#1e8ad6" stroke-width="1.100"/></svg>
<span class="t" style="left:476.41px;top:80.00px;font-size:11.5px;letter-spacing:0.362px;color:#3b3a39;">Merge &amp; Center</span>
<svg style="left:0;top:0" width="1201" height="639"><path d="M573.10 83.30 L575.40 85.70 L577.70 83.30" fill="none" stroke="#444" stroke-width="1.15" stroke-linecap="round" stroke-linejoin="round"/></svg>
<div style="left:601px;top:41px;width:134px;height:23px;background:#fff;border:1px solid #c8c6c4;box-sizing:border-box;"></div>
<span class="t" style="left:604.00px;top:46.00px;font-size:13px;letter-spacing:-1.046px;color:#222;">General</span>
<svg style="left:0;top:0" width="1201" height="639"><path d="M726.40 52.20 L728.70 54.60 L731.00 52.20" fill="none" stroke="#444" stroke-width="1.15" stroke-linecap="round" stroke-linejoin="round"/></svg>
<span class="t" style="left:607.74px;top:76.00px;font-size:16px;letter-spacing:1.314px;color:#3b3a39;">$</span>
<svg style="left:0;top:0" width="1201" height="639"><path d="M627.30 83.30 L629.60 85.70 L631.90 83.30" fill="none" stroke="#444" stroke-width="1.15" stroke-linecap="round" stroke-linejoin="round"/></svg>
<span class="t" style="left:640.70px;top:75.00px;font-size:18px;letter-spacing:1.144px;color:#3b3a39;">%</span>
<span class="t" style="left:668px;top:51.5px;font-size:39px;transform:scaleX(0.88);transform-origin:0 0;font-weight:700;color:#3b3a39;font-family:'Liberation Serif',serif">,</span>
<svg style="left:693px;top:75px;" width="18" height="17" viewBox="0 0 18 17"><text x="8.600" y="8" textLength="7.600" font-family="Liberation Sans, sans-serif" fill="#3b3a39" font-size="9.800" lengthAdjust="spacingAndGlyphs">.0</text><text x="3.500" y="16" textLength="12.700" font-family="Liberation Sans, sans-serif" fill="#3b3a39" font-size="9.800" lengthAdjust="spacingAndGlyphs">.00</text><path d="M10 5.200H1.400M4.800 1.800L1.400 5.200L4.800 8.600" fill="none" stroke="#f3f2f1" stroke-width="3"/><path d="M10 5.200H1.400M4.800 1.800L1.400 5.200L4.800 8.600" fill="none" stroke="#1e8ad6" stroke-width="1.300"/></svg>
<svg style="left:715.5px;top:75px;" width="18" height="17" viewBox="0 0 18 17"><text x="3" y="8" textLength="12.700" font-family="Liberation Sans, sans-serif" fill="#3b3a39" font-size="9.800" lengthAdjust="spacingAndGlyphs">.00</text><text x="8.100" y="16" textLength="7.600" font-family="Liberation Sans, sans-serif" fill="#3b3a39" font-size="9.800" lengthAdjust="spacingAndGlyphs">.0</text><path d="M0.500 12.500H9.300M5.900 9.100L9.300 12.500L5.900 15.900" fill="none" stroke="#f3f2f1" stroke-width="3"/><path d="M0.500 12.500H9.300M5.900 9.100L9.300 12.500L5.900 15.900" fill="none" stroke="#1e8ad6" stroke-width="1.300"/></svg>
<svg style="left:774px;top:40px;" width="29" height="23" viewBox="0 0 29 23"><rect x="0.500" y="0.500" width="27" height="21" fill="#fff" stroke="#3b3a39" stroke-width="1"/><path d="M5.500 0.500v21M22.500 0.500v21M0.500 7.500h27M0.500 14.500h27M18.500 7.500v7" stroke="#3b3a39" stroke-width="1" fill="none"/><rect x="5.500" y="0.500" width="12" height="6.700" fill="#f8959d" stroke="#e03a3e" stroke-width="1"/><rect x="5.500" y="14.700" width="14" height="6.800" fill="#f8959d" stroke="#e03a3e" stroke-width="1"/><rect x="5.500" y="7.700" width="8" height="6.500" fill="#7cb9ea" stroke="#1e6fb8" stroke-width="1"/></svg>
<span class="t" style="left:757.21px;top:73.00px;font-size:11.5px;letter-spacing:0.379px;color:#3b3a39;">Conditional</span>
<span class="t" style="left:753.09px;top:89.00px;font-size:11.5px;letter-spacing:0.463px;color:#3b3a39;">Formatting</span>
<svg style="left:0;top:0" width="1201" height="639"><path d="M816.30 92.30 L818.60 94.70 L820.90 92.30" fill="none" stroke="#444" stroke-width="1.15" stroke-linecap="round" stroke-linejoin="round"/></svg>
<svg style="left:840px;top:40px;" width="32" height="28" viewBox="0 0 32 28"><rect x="0.500" y="0.500" width="27" height="21" fill="#fff" stroke="#3b3a39" stroke-width="1"/><path d="M9.5 0.500v21" stroke="#3b3a39" stroke-width="1"/><path d="M18.5 0.500v21" stroke="#3b3a39" stroke-width="1"/><path d="M0.500 7.5h27" stroke="#3b3a39" stroke-width="1"/><path d="M0.500 14.5h27" stroke="#3b3a39" stroke-width="1"/><rect x="9.500" y="7.500" width="18" height="14" fill="#7cb9ea" stroke="#1e6fb8" stroke-width="1"/><path d="M18.500 7.500v14M9.500 14.500h18" stroke="#1e6fb8" stroke-width="1"/><path d="M29.3 7.8l-11.500 11.200" stroke="#3b3a39" stroke-width="3.600" stroke-linecap="round" fill="none"/><path d="M29.3 7.8l-11.500 11.200" stroke="#fff" stroke-width="1.600" stroke-linecap="round" fill="none"/><path d="M17 18.8c-2.600 -0.900 -4.800 0.600 -5.300 2.800c-0.400 1.800 -2 3 -4.400 3.200c3.600 2.600 11.400 1.800 12 -3.800z" fill="#6db0e8" stroke="#1e6fb8" stroke-width="0.900" stroke-linejoin="round"/></svg>
<span class="t" style="left:828.09px;top:73.00px;font-size:11.5px;letter-spacing:-0.019px;color:#3b3a39;">Format as</span>
<span class="t" style="left:835.43px;top:89.00px;font-size:11.5px;letter-spacing:-0.054px;color:#3b3a39;">Table</span>
<svg style="left:0;top:0" width="1201" height="639"><path d="M866.30 92.30 L868.60 94.70 L870.90 92.30" fill="none" stroke="#444" stroke-width="1.15" stroke-linecap="round" stroke-linejoin="round"/></svg>
<svg style="left:892px;top:40px;" width="32" height="28" viewBox="0 0 32 28"><rect x="0.500" y="0.500" width="27" height="21" fill="#fff" stroke="#3b3a39" stroke-width="1"/><path d="M5.500 0.500v21M22.500 0.500v21M0.500 5.500h27M0.500 16.500h27" stroke="#3b3a39" stroke-width="1" fill="none"/><rect x="5.500" y="5.500" width="17" height="11" fill="#7cb9ea" stroke="#1e6fb8" stroke-width="1.200"/><path d="M28.9 7.8l-11.500 11.200" stroke="#3b3a39" stroke-width="3.600" stroke-linecap="round" fill="none"/><path d="M28.9 7.8l-11.500 11.200" stroke="#fff" stroke-width="1.600" stroke-linecap="round" fill="none"/><path d="M16.6 18.8c-2.600 -0.900 -4.800 0.600 -5.300 2.800c-0.400 1.800 -2 3 -4.400 3.200c3.600 2.600 11.400 1.800 12 -3.800z" fill="#6db0e8" stroke="#1e6fb8" stroke-width="0.900" stroke-linejoin="round"/></svg>
<span class="t" style="left:896.09px;top:73.00px;font-size:11.5px;color:#3b3a39;">Cell</span>
<span class="t" style="left:884.53px;top:89.00px;font-size:11.5px;letter-spacing:-0.167px;color:#3b3a39;">Styles</span>
<svg style="left:0;top:0" width="1201" height="639"><path d="M919.50 92.30 L921.80 94.70 L924.10 92.30" fill="none" stroke="#444" stroke-width="1.15" stroke-linecap="round" stroke-linejoin="round"/></svg>
<svg style="left:949px;top:40px;" width="34" height="23" viewBox="-3 0 34 23"><rect x="0.500" y="0.500" width="27" height="21" fill="#fff" stroke="#3b3a39" stroke-width="1"/><path d="M9.5 0.500v21" stroke="#3b3a39" stroke-width="1"/><path d="M18.5 0.500v21" stroke="#3b3a39" stroke-width="1"/><path d="M0.500 7.5h27" stroke="#3b3a39" stroke-width="1"/><path d="M0.500 14.5h27" stroke="#3b3a39" stroke-width="1"/><rect x="5.500" y="7.500" width="24" height="7" fill="#7cb9ea" stroke="#1e6fb8" stroke-width="1"/><path d="M12.500 7.500v7M20.500 7.500v7" stroke="#1e6fb8" stroke-width="1"/><path d="M11 11H0" fill="none" stroke="#1e8ad6" stroke-width="3.400"/><path d="M11.500 11H-0.500" fill="none" stroke="#fff" stroke-width="1.400"/><path d="M4.800 4.600L-1.700 11L4.800 17.400" fill="none" stroke="#1e8ad6" stroke-width="1.300"/></svg>
<span class="t" style="left:951.09px;top:73.00px;font-size:11.5px;letter-spacing:-0.038px;color:#3b3a39;">Insert</span>
<svg style="left:0;top:0" width="1201" height="639"><path d="M963.20 92.30 L965.50 94.70 L967.80 92.30" fill="none" stroke="#444" stroke-width="1.15" stroke-linecap="round" stroke-linejoin="round"/></svg>
<svg style="left:994px;top:40px;" width="30" height="23" viewBox="0 0 30 23"><rect x="0.500" y="0.500" width="27" height="21" fill="#fff" stroke="#3b3a39" stroke-width="1"/><path d="M9.5 0.500v21" stroke="#3b3a39" stroke-width="1"/><path d="M18.5 0.500v21" stroke="#3b3a39" stroke-width="1"/><path d="M0.500 7.5h27" stroke="#3b3a39" stroke-width="1"/><path d="M0.500 14.5h27" stroke="#3b3a39" stroke-width="1"/><rect x="-1" y="8" width="5" height="6" fill="#f3f2f1"/><rect x="19" y="4" width="11" height="14" fill="#f3f2f1"/><rect x="4.500" y="7.500" width="13" height="7" fill="#7cb9ea" stroke="#1e6fb8" stroke-width="1"/><path d="M12.500 7.500v7" stroke="#1e6fb8" stroke-width="1"/><path d="M17.500 7.500l3.200 3.500-3.200 3.500z" fill="#7cb9ea"/><path d="M18.300 5.600l10.500 11.200M28.800 5.600l-10.500 11.200" stroke="#e8474c" stroke-width="1.300"/></svg>
<span class="t" style="left:991.31px;top:73.00px;font-size:11.5px;letter-spacing:0.022px;color:#3b3a39;">Delete</span>
<svg style="left:0;top:0" width="1201" height="639"><path d="M1005.20 92.30 L1007.50 94.70 L1009.80 92.30" fill="none" stroke="#444" stroke-width="1.15" stroke-linecap="round" stroke-linejoin="round"/></svg>
<svg style="left:1036px;top:40px;" width="29" height="23" viewBox="0 0 29 23"><rect x="0.500" y="0.500" width="27" height="21" fill="#fff" stroke="#3b3a39" stroke-width="1"/><path d="M7.500 0.500v21M20.500 0.500v21M0.500 7.500h27M0.500 14.500h27" stroke="#3b3a39" stroke-width="1" fill="none"/><rect x="7.500" y="7.500" width="13" height="7" fill="#7cb9ea" stroke="#1e6fb8" stroke-width="1.200"/></svg>
<svg style="left:1042px;top:34px;" width="17" height="6" viewBox="0 0 17 6"><path d="M0.500 2.500h15.500M0.500 1v3M16 1v3" stroke="#1e8ad6" stroke-width="1" fill="none"/></svg>
<span class="t" style="left:1031.31px;top:73.00px;font-size:11.5px;letter-spacing:0.186px;color:#3b3a39;">Format</span>
<svg style="left:0;top:0" width="1201" height="639"><path d="M1047.30 92.30 L1049.60 94.70 L1051.90 92.30" fill="none" stroke="#444" stroke-width="1.15" stroke-linecap="round" stroke-linejoin="round"/></svg>
<svg style="left:1092px;top:35px;" width="15" height="16" viewBox="0 0 15 16"><path d="M12.500 3.500V1.500H1.800L8 8L1.800 14.500H12.500V12.500" fill="none" stroke="#3b3a39" stroke-width="1.200"/></svg>
<svg style="left:0;top:0" width="1201" height="639"><path d="M1114.40 42.30 L1116.70 44.70 L1119.00 42.30" fill="none" stroke="#444" stroke-width="1.15" stroke-linecap="round" stroke-linejoin="round"/></svg>
<svg style="left:1091px;top:59px;" width="17" height="15" viewBox="0 0 17 15"><rect x="0.500" y="0.500" width="15" height="13" fill="#fff" stroke="#3b3a39" stroke-width="1"/><path d="M0.500 2.500h15" stroke="#3b3a39" stroke-width="1"/><path d="M7.800 4.200v6.800M4.600 8L7.800 11.200L11 8" fill="none" stroke="#1e8ad6" stroke-width="1.200"/></svg>
<svg style="left:0;top:0" width="1201" height="639"><path d="M1112.30 65.30 L1114.60 67.70 L1116.90 65.30" fill="none" stroke="#444" stroke-width="1.15" stroke-linecap="round" stroke-linejoin="round"/></svg>
<svg style="left:1090px;top:81px;" width="18" height="17" viewBox="0 0 18 17"><path d="M1.500 10L10.500 1.500L16 7L7 15.500z" fill="#fdfdfd" stroke="#a33fb5" stroke-width="1.200" stroke-linejoin="round"/><path d="M1.500 10L4.800 6.900L10.300 12.400L7 15.500z" fill="#c67fd6" stroke="#a33fb5" stroke-width="1.200" stroke-linejoin="round"/></svg>
<svg style="left:0;top:0" width="1201" height="639"><path d="M1112.30 88.30 L1114.60 90.70 L1116.90 88.30" fill="none" stroke="#444" stroke-width="1.15" stroke-linecap="round" stroke-linejoin="round"/></svg>
<span class="t" style="left:1132.96px;top:37.00px;font-size:16px;letter-spacing:1.448px;color:#1e8ad6;">A</span>
<span class="t" style="left:1132.87px;top:51.00px;font-size:15.5px;letter-spacing:2.391px;color:#3b3a39;">Z</span>
<svg style="left:1144px;top:43px;" width="18" height="18" viewBox="0 0 18 18"><path d="M1 1.500h15.600l-6 7.200v6.800h-3.600v-6.800z" fill="#f3f2f1" stroke="#3b3a39" stroke-width="1.100" stroke-linejoin="round"/></svg>
<span class="t" style="left:1129.87px;top:73.00px;font-size:11.5px;letter-spacing:0.402px;color:#3b3a39;">Sort &amp;</span>
<span class="t" style="left:1127.63px;top:89.00px;font-size:11.5px;letter-spacing:0.136px;color:#3b3a39;">Filter</span>
<svg style="left:0;top:0" width="1201" height="639"><path d="M1158.20 92.30 L1160.50 94.70 L1162.80 92.30" fill="none" stroke="#444" stroke-width="1.15" stroke-linecap="round" stroke-linejoin="round"/></svg>
<svg style="left:1174px;top:36px;" width="30" height="32" viewBox="0 0 30 32"><circle cx="19.500" cy="11.800" r="9.700" fill="#faf9f8" stroke="#3b3a39" stroke-width="1.100"/><path d="M12.500 18.500L1.500 29.500" stroke="#3b3a39" stroke-width="1.200"/></svg>
<span class="t" style="left:1172.41px;top:73.00px;font-size:11.5px;color:#3b3a39;">Find &amp;</span>
<span class="t" style="left:1170.21px;top:89.00px;font-size:11.5px;color:#3b3a39;">Select</span>
<span class="t" style="left:7.08px;top:138.00px;font-size:12px;letter-spacing:-0.276px;color:#3b3a39;">AutoSave</span>
<div style="left:64px;top:135px;width:38px;height:17px;background:#217346;border-radius:9px;"></div>
<span class="t" style="left:69.43px;top:139.00px;font-size:9.5px;letter-spacing:-0.374px;color:#f3f2f1;">On</span>
<div style="left:90px;top:139px;width:8px;height:8px;background:#f3f2f1;border-radius:4px;"></div>
<svg style="left:116px;top:136px;" width="18" height="18" viewBox="0 0 18 18"><path d="M10 15.500H3.500L1.500 13.500V1.500h12.500v6" fill="none" stroke="#3b3a39" stroke-width="1.100"/>
<path d="M4.500 1.500v4h7v-4" fill="none" stroke="#3b3a39" stroke-width="1.100"/><path d="M4.500 15v-5h4" fill="none" stroke="#3b3a39" stroke-width="1.100"/>
<path d="M9.500 12.500a3.500 3.500 0 0 1 6.300 -2M16.500 13a3.500 3.500 0 0 1 -6.300 2M16 8v2.700h-2.700M10 17.200v-2.700h2.700" fill="none" stroke="#2ea04d" stroke-width="1.200"/></svg>
<svg style="left:146px;top:134px;" width="17" height="20" viewBox="0 0 17 20"><path d="M1.500 2v6.500h6.500M1.800 8.300C4 3.500 10 2 13.500 5.500c3 3.200 1 7.500 -5.500 13" fill="none" stroke="#3b3a39" stroke-width="1.200"/></svg>
<svg style="left:0;top:0" width="1201" height="639"><path d="M168.00 142.30 L170.30 144.70 L172.60 142.30" fill="none" stroke="#444" stroke-width="1.15" stroke-linecap="round" stroke-linejoin="round"/></svg>
<svg style="left:185px;top:134px;" width="17" height="20" viewBox="0 0 17 20"><path d="M15.500 2v6.500H9M15.200 8.300C13 3.500 7 2 3.500 5.500c-3 3.200 -1 7.500 5.500 13" fill="none" stroke="#b1afad" stroke-width="1.200"/></svg>
<svg style="left:0;top:0" width="1201" height="639"><path d="M207.00 142.30 L209.30 144.70 L211.60 142.30" fill="none" stroke="#b1afad" stroke-width="1.15" stroke-linecap="round" stroke-linejoin="round"/></svg>
<div style="left:228px;top:140px;width:7px;height:1px;background:#3b3a39;"></div>
<svg style="left:0;top:0" width="1201" height="639"><path d="M228.50 143.50 L231.50 146.50 L234.50 143.50" fill="none" stroke="#3b3a39" stroke-width="1.15" stroke-linecap="round" stroke-linejoin="round"/></svg>
<div style="left:3px;top:171px;width:101px;height:26px;background:#fff;border:1px solid #d4d4d4;box-sizing:border-box;"></div>
<span class="t" style="left:8.80px;top:178.00px;font-size:13px;letter-spacing:0.647px;color:#333;">A2</span>
<svg style="left:89px;top:181px;" width="9" height="5" viewBox="0 0 9 5"><path d="M0.500 0.500h8l-4 4z" fill="#666"/></svg>
<div style="left:118px;top:178px;width:1.5px;height:1.5px;background:#a0a0a0;"></div>
<div style="left:118px;top:182.5px;width:1.5px;height:1.5px;background:#a0a0a0;"></div>
<div style="left:118px;top:187px;width:1.5px;height:1.5px;background:#a0a0a0;"></div>
<div style="left:134px;top:171px;width:110px;height:26px;background:#fff;border:1px solid #d4d4d4;box-sizing:border-box;"></div>
<svg style="left:147px;top:178px;" width="12" height="12" viewBox="0 0 12 12"><path d="M1.200 1.600l9.200 9.200M10.400 1.600l-9.200 9.200" stroke="#bcbcbc" stroke-width="1.700" fill="none"/></svg>
<svg style="left:183px;top:178px;" width="14" height="13" viewBox="0 0 14 13"><path d="M0.800 7l4.300 4.200L12.600 1.400" stroke="#c2c2c2" stroke-width="2.100" fill="none"/></svg>
<span class="t" style="left:219.03px;top:177.00px;font-size:14.5px;font-weight:700;letter-spacing:0.617px;font-style:italic;font-family:'Liberation Serif',serif;color:#555;">f<span style="position:static;font-size:10px;letter-spacing:0">x</span></span>
<div style="left:247px;top:171px;width:960px;height:26px;background:#fff;border:1px solid #d4d4d4;box-sizing:border-box;"></div>
<span class="t" style="left:258.22px;top:178.00px;font-size:13px;letter-spacing:1.287px;color:#333;">Bill</span>
<div style="left:258px;top:239px;width:586px;height:268px;box-shadow:0 5px 15px 2px rgba(0,0,0,0.30),0 0 3px rgba(0,0,0,0.22);"></div>
<div style="left:258px;top:239px;width:586px;height:268px;background:#f0f0f0;border:1px solid #6d6d6d;box-sizing:border-box;"></div>
<div style="left:259px;top:240px;width:584px;height:30px;background:#fff;"></div>
<span class="t" style="left:267.18px;top:249.00px;font-size:12px;letter-spacing:-0.369px;color:#000;">Sort</span>
<span class="t" style="left:772.22px;top:248.00px;font-size:13px;letter-spacing:-0.674px;color:#000;">?</span>
<svg style="left:814px;top:248px;" width="13" height="13" viewBox="0 0 13 13"><path d="M1.300 1.300l9.700 9.700M11 1.300L1.300 11" stroke="#111" stroke-width="1.100" fill="none"/></svg>
<div style="left:266px;top:278px;width:85px;height:24px;background:#e1e1e1;border:1px solid #adadad;box-sizing:border-box;"></div>
<svg style="left:274px;top:282px;" width="15" height="15" viewBox="0 0 15 15"><path d="M7.500 0.500v14M0.500 7.500h14" stroke="#2ea04d" stroke-width="1.200" fill="none"/></svg>
<span class="t" style="left:293.11px;top:285.00px;font-size:11.5px;letter-spacing:-0.286px;color:#000;"><u>A</u>dd Level</span>
<div style="left:355px;top:278px;width:97px;height:24px;background:#e1e1e1;border:1px solid #adadad;box-sizing:border-box;"></div>
<svg style="left:364px;top:283px;" width="14" height="14" viewBox="0 0 14 14"><path d="M1 1l12 12M13 1L1 13" stroke="#e8474c" stroke-width="1.200" fill="none"/></svg>
<span class="t" style="left:381.41px;top:285.00px;font-size:11.5px;letter-spacing:-0.213px;color:#000;"><u>D</u>elete Level</span>
<div style="left:456px;top:278px;width:90px;height:24px;background:#e1e1e1;border:1px solid #adadad;box-sizing:border-box;"></div>
<svg style="left:463px;top:281px;" width="18" height="18" viewBox="0 0 18 18"><path d="M5.500 14.500h-4v-13h5.500l2 2" fill="none" stroke="#333" stroke-width="1"/>
<path d="M7.500 5h5.500l3.500 3.500v8h-9z" fill="#fff" stroke="#333" stroke-width="1"/><path d="M13 5v3.500h3.500" fill="none" stroke="#333" stroke-width="1"/>
<path d="M10 11.500h4M10 13.500h4" stroke="#333" stroke-width="1"/></svg>
<span class="t" style="left:482.31px;top:285.00px;font-size:11.5px;letter-spacing:-0.317px;color:#000;"><u>C</u>opy Level</span>
<div style="left:548px;top:277px;width:1.5px;height:26px;background:#000;"></div>
<div style="left:552px;top:278px;width:24px;height:24px;background:#e4e4e4;border:1px solid #c4c4c4;box-sizing:border-box;"></div>
<svg style="left:557px;top:285px;" width="14" height="9" viewBox="0 0 14 9"><path d="M2 7L7 2L12 7" stroke="#b8b8b8" stroke-width="1.200" fill="none"/></svg>
<div style="left:580px;top:278px;width:24px;height:24px;background:#e4e4e4;border:1px solid #c4c4c4;box-sizing:border-box;"></div>
<svg style="left:585px;top:286px;" width="14" height="9" viewBox="0 0 14 9"><path d="M2 2L7 7L12 2" stroke="#b8b8b8" stroke-width="1.200" fill="none"/></svg>
<div style="left:608px;top:278px;width:69px;height:24px;background:#e1e1e1;border:1px solid #adadad;box-sizing:border-box;"></div>
<span class="t" style="left:618.21px;top:285.00px;font-size:11.5px;letter-spacing:0.116px;color:#000;"><u>O</u>ptions...</span>
<div style="left:709px;top:283px;width:13px;height:13px;background:#fff;border:1px solid #333;box-sizing:border-box;"></div>
<svg style="left:709px;top:283px;" width="13" height="13" viewBox="0 0 13 13"><path d="M2.500 6.500l3 3L10.500 3" stroke="#222" stroke-width="1.200" fill="none"/></svg>
<span class="t" style="left:729.09px;top:285.00px;font-size:11.5px;letter-spacing:-0.093px;color:#000;">My data has <u>h</u>eaders</span>
<div style="left:265px;top:306px;width:572px;height:167px;background:#fff;border:1px solid #828790;box-sizing:border-box;"></div>
<div style="left:459px;top:307px;width:1px;height:21px;background:#e5e5e5;"></div>
<div style="left:651px;top:307px;width:1px;height:21px;background:#e5e5e5;"></div>
<div style="left:834px;top:307px;width:1px;height:21px;background:#e5e5e5;"></div>
<span class="t" style="left:271.09px;top:313.00px;font-size:11.5px;letter-spacing:0.042px;color:#000;">Column</span>
<span class="t" style="left:464.09px;top:313.00px;font-size:11.5px;letter-spacing:0.106px;color:#000;">Sort On</span>
<span class="t" style="left:656.55px;top:313.00px;font-size:11.5px;letter-spacing:-0.010px;color:#000;">Order</span>
<div style="left:267px;top:328px;width:568px;height:23px;background:#dfdfe7;"></div>
<span class="t" style="left:269.09px;top:331.00px;font-size:11.5px;letter-spacing:-0.125px;color:#000;">Sort by</span>
<div style="left:320px;top:329px;width:130px;height:21px;background:#fff;border:1px solid #a9a9a9;box-sizing:border-box;"></div>
<div style="left:431px;top:331px;width:17px;height:17px;background:#e5f1fb;border:1px solid #0078d7;box-sizing:border-box;"></div>
<svg style="left:434px;top:337px;" width="11" height="7" viewBox="0 0 11 7"><path d="M1.500 1.500L5.500 5.500L9.500 1.500" stroke="#333" stroke-width="1.100" fill="none"/></svg>
<span class="t" style="left:324.09px;top:334.00px;font-size:11.5px;letter-spacing:0.742px;color:#000;">Month</span>
<div style="left:461px;top:329px;width:181px;height:21px;background:#fff;border:1px solid #a9a9a9;box-sizing:border-box;"></div>
<div style="left:623px;top:331px;width:17px;height:17px;background:#e1e1e1;border:1px solid #adadad;box-sizing:border-box;"></div>
<svg style="left:626px;top:337px;" width="11" height="7" viewBox="0 0 11 7"><path d="M1.500 1.500L5.500 5.500L9.500 1.500" stroke="#333" stroke-width="1.100" fill="none"/></svg>
<span class="t" style="left:465.33px;top:334.00px;font-size:11.5px;letter-spacing:-0.146px;color:#000;">Cell Values</span>
<div style="left:653px;top:329px;width:181px;height:21px;background:#fff;border:1px solid #a9a9a9;box-sizing:border-box;"></div>
<div style="left:815px;top:331px;width:17px;height:17px;background:#e1e1e1;border:1px solid #adadad;box-sizing:border-box;"></div>
<svg style="left:818px;top:337px;" width="11" height="7" viewBox="0 0 11 7"><path d="M1.500 1.500L5.500 5.500L9.500 1.500" stroke="#333" stroke-width="1.100" fill="none"/></svg>
<span class="t" style="left:656.87px;top:334.00px;font-size:11.5px;letter-spacing:-0.174px;color:#000;">Smallest to Largest</span>
<div style="left:320px;top:350px;width:130px;height:41px;background:#fff;border:1px solid #000;box-sizing:border-box;"></div>
<span class="t" style="left:323.09px;top:353.00px;font-size:11.5px;letter-spacing:-0.707px;color:#000;">Name</span>
<span class="t" style="left:323.09px;top:366.00px;font-size:11.5px;letter-spacing:-0.126px;color:#000;">Date</span>
<div style="left:321px;top:377px;width:128px;height:13px;background:#99c9ef;border:1px dotted #333;box-sizing:border-box;"></div>
<span class="t" style="left:323.09px;top:379.00px;font-size:11.5px;letter-spacing:0.712px;color:#000;">Month</span>
<div style="left:679px;top:477px;width:73px;height:21px;background:#e1e1e1;border:2px solid #0078d7;box-sizing:border-box;"></div>
<span class="t" style="left:708.09px;top:483.00px;font-size:11.5px;letter-spacing:-0.903px;color:#000;">OK</span>
<div style="left:763px;top:477px;width:73px;height:21px;background:#e1e1e1;border:1px solid #adadad;box-sizing:border-box;"></div>
<span class="t" style="left:782.21px;top:483.00px;font-size:11.5px;letter-spacing:-0.343px;color:#000;">Cancel</span>
<div style="left:838px;top:496px;width:2px;height:2px;background:#b8b8b8;"></div>
<div style="left:838px;top:499px;width:2px;height:2px;background:#b8b8b8;"></div>
<div style="left:835px;top:499px;width:2px;height:2px;background:#b8b8b8;"></div>
<div style="left:838px;top:502px;width:2px;height:2px;background:#b8b8b8;"></div>
<div style="left:835px;top:502px;width:2px;height:2px;background:#b8b8b8;"></div>
<div style="left:832px;top:502px;width:2px;height:2px;background:#b8b8b8;"></div>
</body></html>
